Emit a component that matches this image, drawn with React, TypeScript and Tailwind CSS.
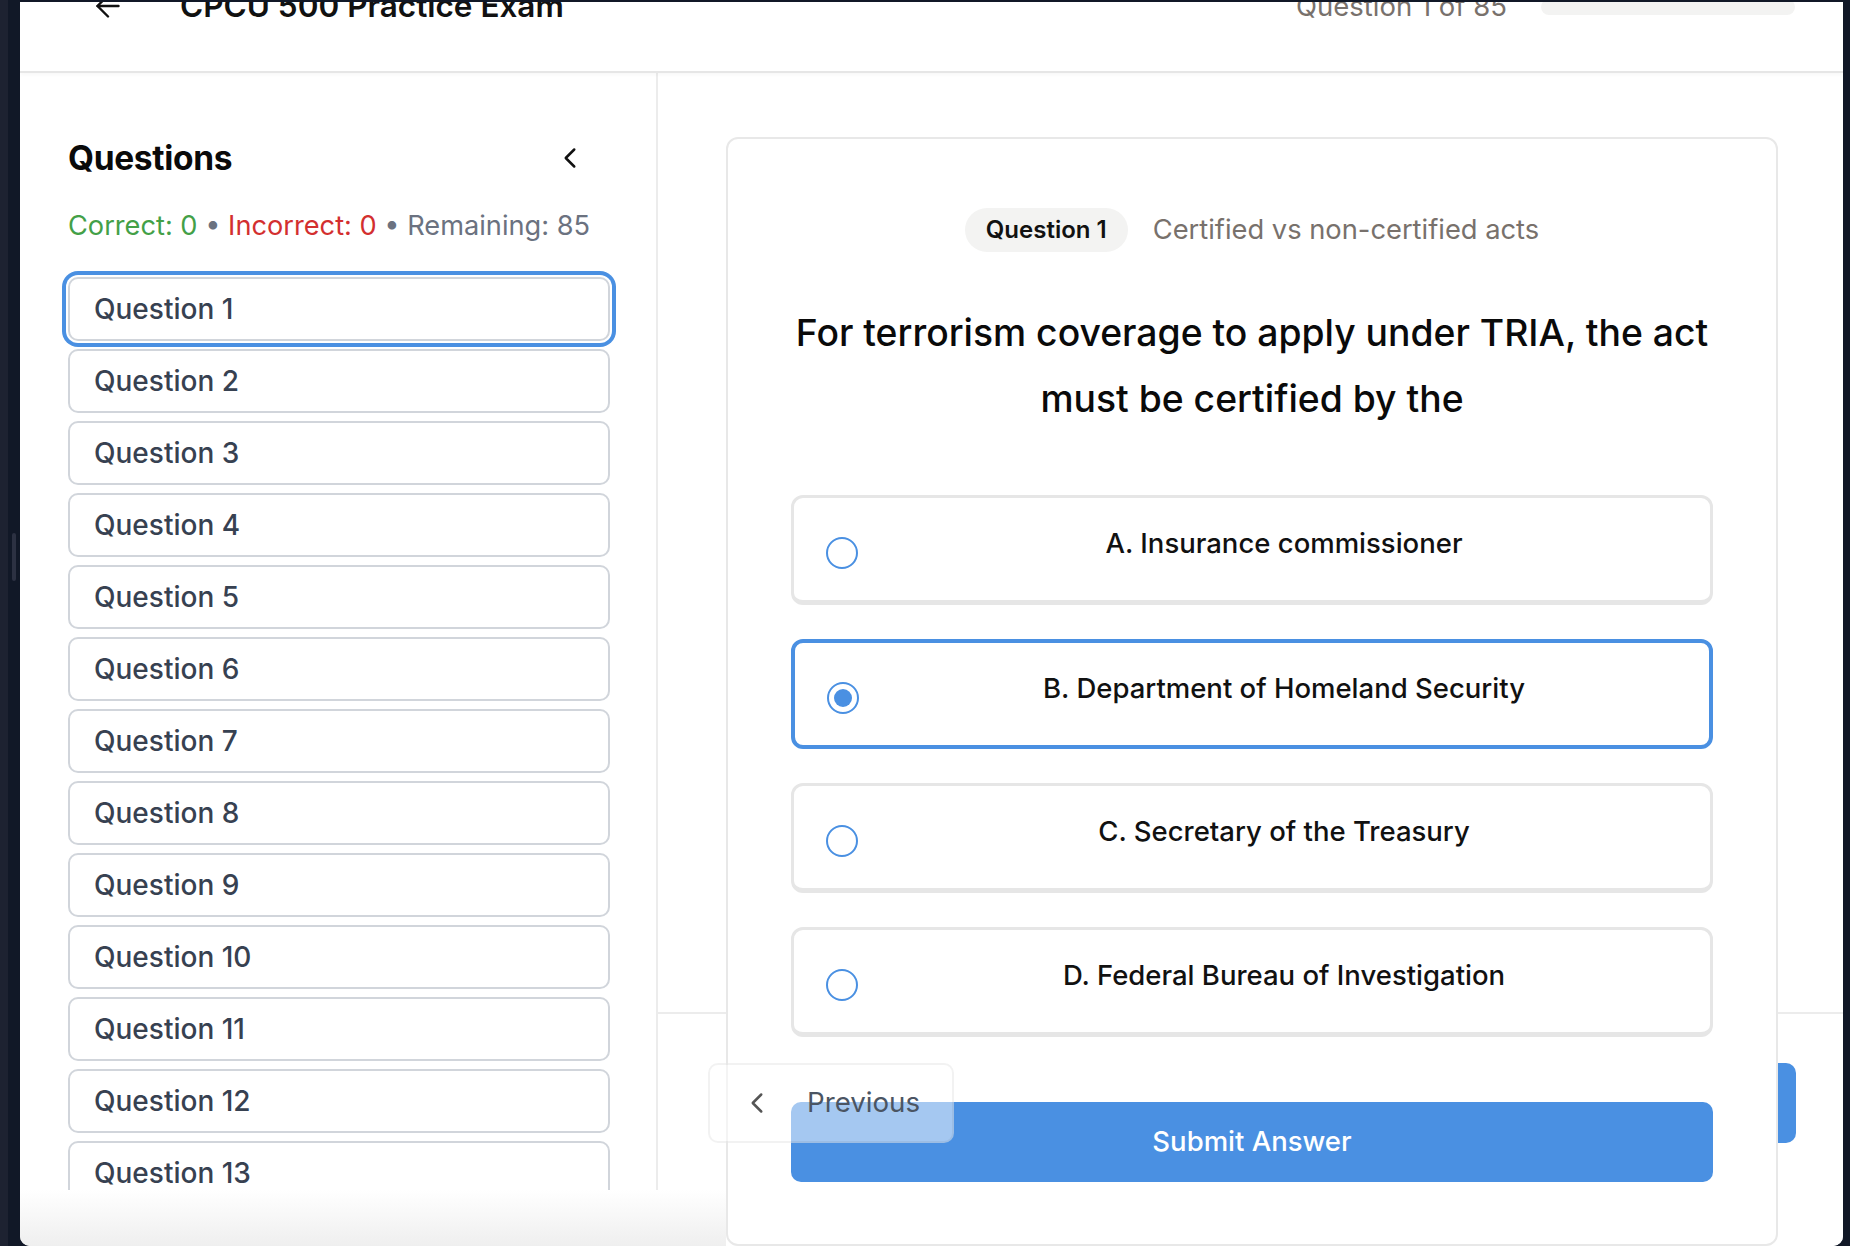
import { ArrowLeft, ChevronLeft } from 'lucide-react'
import clsx from 'clsx'

const questions = Array.from({ length: 13 }, (_, i) => i + 1)

const options = [
  { id: 'A', text: 'A. Insurance commissioner' },
  { id: 'B', text: 'B. Department of Homeland Security' },
  { id: 'C', text: 'C. Secretary of the Treasury' },
  { id: 'D', text: 'D. Federal Bureau of Investigation' },
]

const selected = 'B'

function Radio({ checked }: { checked: boolean }) {
  return (
    <div className="mt-[39px] flex h-8 w-8 shrink-0 items-center justify-center rounded-full border-2 border-[#4a90e2] bg-white">
      {checked && <div className="h-[18px] w-[18px] rounded-full bg-[#4a90e2]" />}
    </div>
  )
}

export default function App() {
  return (
    <div className="flex h-[1246px] w-[1850px] overflow-hidden bg-[#111827] font-['Inter',sans-serif]">
      <div className="w-2 shrink-0 bg-[#1d2231]" />
      <div className="relative w-3 shrink-0">
        <div className="absolute left-1 top-[533px] h-12 w-1 rounded-full bg-[#2c3142]" />
      </div>

      <div className="mt-[2px] flex min-w-0 flex-1 flex-col overflow-hidden rounded-b-[10px] bg-white">
        <header className="relative flex h-[71px] shrink-0 items-start justify-between border-b-2 border-[#e6e6e6] pl-[70px] pr-[48px] shadow-[0_2px_4px_rgba(0,0,0,0.03)]">
          <div className="-mt-[14px] flex h-9 items-center gap-[54px]">
            <ArrowLeft size={36} strokeWidth={1.6} className="text-[#111]" />
            <h1 className="text-[31.5px] font-semibold text-[#111]">CPCU 500 Practice Exam</h1>
          </div>
          <div className="-mt-[13px] flex h-9 items-center gap-[34px]">
            <span className="text-[27.5px] text-[#78716c]">Question 1 of 85</span>
            <div className="h-4 w-[254px] rounded-full bg-[#f3f3f2]" />
          </div>
        </header>

        <div className="flex h-[1117px] shrink-0">
          <aside className="flex w-[638px] shrink-0 flex-col overflow-hidden border-r-2 border-[#ececec] pl-12 pr-[46px] pt-[65px]">
            <div className="flex h-10 shrink-0 items-center justify-between">
              <h2 className="text-[33.5px] font-bold tracking-[-0.01em] text-[#0a0a0a]">Questions</h2>
              <ChevronLeft size={34} strokeWidth={1.75} className="mr-[23px] text-[#111]" />
            </div>
            <div className="mt-[30px] h-9 shrink-0 whitespace-nowrap text-[27.2px] leading-9">
              <span className="text-[#43a047]">Correct: 0</span>
              <span className="text-[#6b7280]"> • </span>
              <span className="text-[#d32f2f]">Incorrect: 0</span>
              <span className="text-[#6b7280]"> • Remaining: 85</span>
            </div>
            <div className="mt-[33px] flex flex-col gap-2">
              {questions.map((n) => (
                <button
                  key={n}
                  className={clsx(
                    'flex h-16 w-full shrink-0 items-center rounded-[10px] border-2 border-[#d1d5db] bg-white pl-6 text-left text-[28px] font-medium text-[#374151]',
                    n === 1 && 'ring-4 ring-[#4a90e2] ring-offset-2',
                  )}
                >
                  Question {n}
                </button>
              ))}
            </div>
          </aside>

          <main className="flex min-w-0 flex-1 flex-col">
            <div className="min-h-0 flex-1 pl-[68px] pt-[64px]">
              <section className="relative z-10 flex h-[1109px] w-[1052px] flex-col rounded-xl border-2 border-[#e8e8e8] bg-white px-[63px] pt-[69px]">
                <div className="flex h-11 items-center justify-center gap-[25px]">
                  <span className="flex h-11 items-center rounded-full bg-[#f3f3f2] px-[21px] text-[24px] font-semibold text-[#111]">
                    Question 1
                  </span>
                  <span className="text-[27.3px] text-[#78716c]">Certified vs non-certified acts</span>
                </div>

                <p className="mt-[48px] text-center text-[37.3px] font-medium leading-[66px] text-[#0a0a0a]">
                  <span className="block whitespace-nowrap">For terrorism coverage to apply under TRIA, the act</span>
                  <span className="block whitespace-nowrap">must be certified by the</span>
                </p>

                <div className="mt-[63px] flex flex-col gap-[34px]">
                  {options.map((o) => {
                    const sel = o.id === selected
                    return (
                      <div
                        key={o.id}
                        className={clsx(
                          'flex h-[110px] items-start rounded-[12px] bg-white px-8',
                          sel ? 'border-4 border-[#4a90e2]' : 'border-[3px] border-b-[5px] border-[#e6e6e6]',
                        )}
                      >
                        <Radio checked={sel} />
                        <span className="ml-8 mt-[27px] flex-1 whitespace-nowrap text-center text-[27.5px] font-medium leading-9 text-[#111]">
                          {o.text}
                        </span>
                      </div>
                    )
                  })}
                </div>

                <button className="mt-[65px] flex h-20 w-full shrink-0 items-center justify-center rounded-[10px] bg-[#4a90e2] text-[27.5px] font-medium text-white">
                  Submit Answer
                </button>
              </section>
            </div>

            <div className="flex h-[178px] shrink-0 items-start justify-between border-t-2 border-[#ececec] pl-[50px] pr-[47px] pt-[49px]">
              <button className="relative z-20 flex h-20 w-[246px] items-center gap-[33px] rounded-[10px] border-2 border-black/[0.05] bg-white/50 pl-[30px] text-[27.7px] text-[#4b5563]">
                <ChevronLeft size={34} strokeWidth={1.75} className="text-[#555]" />
                Previous
              </button>
              <button className="flex h-20 w-[200px] items-center justify-center rounded-[10px] bg-[#4a90e2] text-[27px] font-medium text-white">
                Next
              </button>
            </div>
          </main>
        </div>

        <div className="flex h-[56px] shrink-0">
          <div className="w-[706px] bg-linear-to-b from-white to-[#efefef]" />
          <div className="flex-1 bg-white" />
        </div>
      </div>

      <div className="w-[7px] shrink-0" />
    </div>
  )
}
